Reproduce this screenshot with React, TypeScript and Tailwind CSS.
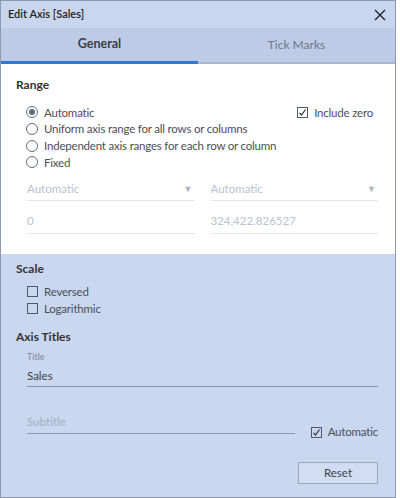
import React from 'react';

const font = { fontFamily: 'Lato, "Noto Sans", sans-serif' };

function Radio({ checked, label }: { checked?: boolean; label: string }) {
  return (
    <div className="flex items-center h-[16.7px] whitespace-nowrap">
      <span className="w-[12px] h-[12px] rounded-full border border-[#5f6d82] flex items-center justify-center bg-white">
        {checked && <span className="w-[6px] h-[6px] rounded-full bg-[#5f6d82]" />}
      </span>
      <span className="ml-[6px] text-[11.5px] tracking-[-0.2px] text-[#4a4f57]">{label}</span>
    </div>
  );
}

function Check({ checked, label }: { checked?: boolean; label: string }) {
  return (
    <div className="flex items-center h-[17px] whitespace-nowrap">
      <span className="w-[11px] h-[11px] border border-[#4f5a6b] flex items-center justify-center">
        {checked && (
          <svg width="9" height="9" viewBox="0 0 9 9">
            <path d="M1.5 4.8 L3.5 7 L7.5 1.5" stroke="#333" strokeWidth="1.2" fill="none" />
          </svg>
        )}
      </span>
      <span className="ml-[6px] text-[11.5px] tracking-[-0.2px] text-[#4a4f57]">{label}</span>
    </div>
  );
}

export default function App() {
  return (
    <div className="w-[400px] h-[498px] bg-white" style={font}>
      <div className="w-[396px] h-[498px] border border-[#8d99ad] bg-[#c9d7f0] flex flex-col">
        {/* Title bar */}
        <div className="h-[27px] flex items-center justify-between pl-[7px] pr-[9px] bg-[#c9d6ef]">
          <span className="text-[11px] font-semibold text-[#222]">Edit Axis [Sales]</span>
          <svg width="12" height="12" viewBox="0 0 12 12">
            <path d="M1 1 L11 11 M11 1 L1 11" stroke="#222" strokeWidth="1.4" />
          </svg>
        </div>

        {/* Tabs */}
        <div className="h-[36px] flex bg-[#bdcbe6]">
          <div className="w-[197px] flex items-center justify-center border-b-[3px] border-[#2c7ad6] text-[12.5px] font-bold text-[#3a3f47]">
            General
          </div>
          <div className="flex-1 flex items-center justify-center border-b-[2px] border-[#a9b6cb] text-[12px] text-[#6b778a]">
            Tick Marks
          </div>
        </div>

        {/* Range panel */}
        <div className="bg-white h-[190px] px-[15px] pt-[12px]">
          <div className="text-[12px] font-bold text-[#333]">Range</div>
          <div className="flex justify-between mt-[10px] pl-[10px]">
            <div className="flex flex-col">
              <Radio checked label="Automatic" />
              <Radio label="Uniform axis range for all rows or columns" />
              <Radio label="Independent axis ranges for each row or column" />
              <Radio label="Fixed" />
            </div>
            <div className="pr-[7px]">
              <Check checked label="Include zero" />
            </div>
          </div>
          <div className="grid grid-cols-2 gap-x-[16px] pl-[11px] mt-[6px] pr-[2px]">
            <div className="h-[24px] flex items-center justify-between border-b border-[#e3e7ee] text-[11.5px] text-[#b9c2d1]">
              <span>Automatic</span>
              <span className="text-[9px] text-[#aab5c6] mr-[2px]">▼</span>
            </div>
            <div className="h-[24px] flex items-center justify-between border-b border-[#e3e7ee] text-[11.5px] text-[#b9c2d1]">
              <span>Automatic</span>
              <span className="text-[9px] text-[#aab5c6] mr-[2px]">▼</span>
            </div>
            <div className="h-[33px] flex items-end pb-[4px] border-b border-[#e3e7ee] text-[11.5px] text-[#b9c2d1]">
              0
            </div>
            <div className="h-[33px] flex items-end pb-[4px] border-b border-[#e3e7ee] text-[11.5px] text-[#b9c2d1]">
              324,422.826527
            </div>
          </div>
        </div>

        {/* Lower section */}
        <div className="flex-1 px-[15px] pt-[6px]">
          <div className="text-[12px] font-bold text-[#333]">Scale</div>
          <div className="mt-[5px] pl-[11px]">
            <Check label="Reversed" />
            <Check label="Logarithmic" />
          </div>
          <div className="mt-[11px] text-[12px] font-bold text-[#333]">Axis Titles</div>
          <div className="pl-[11px] pr-[2px]">
            <div className="mt-[4px] text-[9px] text-[#7d8594]">Title</div>
            <div className="mt-[3px] h-[20px] flex items-center border-b border-[#8591a6] text-[11.5px] text-[#3d424a]">
              Sales
            </div>
            <div className="flex items-end mt-[25px]">
              <div className="w-[268px] h-[22px] flex items-center border-b border-[#8d99ad] text-[11.5px] text-[#a3aec0]">
                Subtitle
              </div>
              <div className="ml-[16px] mb-[-7px]">
                <Check checked label="Automatic" />
              </div>
            </div>
            <div className="flex justify-end mt-[28px]">
              <button className="w-[80px] h-[22px] border border-[#9aa6ba] bg-[#d0ddf3] text-[11.5px] text-[#3d424a]">
                Reset
              </button>
            </div>
          </div>
        </div>
      </div>
    </div>
  );
}
